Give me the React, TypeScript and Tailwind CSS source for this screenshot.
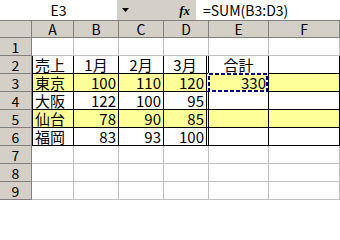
import { Fragment } from "react";

const rows = [
  { n: 1, cells: ["", "", "", "", "", ""], kind: "plain" },
  { n: 2, cells: ["売上", "1月", "2月", "3月", "合計", ""], kind: "head" },
  { n: 3, cells: ["東京", "100", "110", "120", "330", ""], kind: "yellow" },
  { n: 4, cells: ["大阪", "122", "100", "95", "", ""], kind: "white" },
  { n: 5, cells: ["仙台", "78", "90", "85", "", ""], kind: "yellow" },
  { n: 6, cells: ["福岡", "83", "93", "100", "", ""], kind: "white" },
  { n: 7, cells: ["", "", "", "", "", ""], kind: "plain" },
  { n: 8, cells: ["", "", "", "", "", ""], kind: "plain" },
  { n: 9, cells: ["", "", "", "", "", ""], kind: "plain" },
];

const cols = ["A", "B", "C", "D", "E", "F"];

function cellClass(kind: string, col: number) {
  if (kind === "plain") return "border-r border-b border-[#c0c0c0]";
  if (col === 0) return "border-l border-r border-b border-black";
  if (col === 3) return "border-r-[3px] border-b border-double border-black";
  return "border-r border-b border-black";
}

function alignClass(kind: string, col: number) {
  if (col === 0) return "justify-start pl-[2px]";
  if (kind === "head") return "justify-center";
  return "justify-end pr-[2px]";
}

function MarchingAnts() {
  return (
    <svg className="absolute -left-[1px] -top-[1px] h-[19px] w-[60px]" viewBox="0 0 60 19">
      <rect x="1" y="1" width="58" height="17" fill="none" stroke="#ffffff" strokeWidth="2" />
      <rect x="1" y="1" width="58" height="17" fill="none" stroke="#000080" strokeWidth="2" strokeDasharray="4 2" />
    </svg>
  );
}

export default function App() {
  return (
    <div className="h-[200px] w-[340px] overflow-hidden bg-white font-['Noto_Sans_CJK_JP',sans-serif] text-black">
      <div className="flex h-[21px] border-b border-[#808080] text-[14px] leading-none">
        <div className="flex w-[117px] items-center justify-center bg-white">E3</div>
        <div className="flex w-[79px] items-center bg-[#d4d0c8]">
          <svg className="ml-[5px] h-[4px] w-[7px]" viewBox="0 0 7 4">
            <path d="M0 0h7L3.5 4z" fill="#000" />
          </svg>
          <span className="ml-auto mr-[6px] font-['Liberation_Serif',serif] text-[13px] font-bold italic">fx</span>
        </div>
        <div className="flex flex-1 items-center bg-white pl-[7px]">=SUM(B3:D3)</div>
      </div>

      <div className="grid grid-cols-[32px_42px_45px_45px_45px_60px_1fr] text-[15px] leading-none">
        <div className="h-[17px] border-r border-b border-[#808080] bg-[#d4d0c8]" />
        {cols.map((c) => (
          <div
            key={c}
            className="flex h-[17px] items-center justify-center border-r border-b border-[#808080] bg-[#d4d0c8] text-[14px]"
          >
            {c}
          </div>
        ))}
        {rows.map((r) => (
          <Fragment key={r.n}>
            <div className="flex h-[18px] items-center justify-center border-r border-b border-[#808080] bg-[#d4d0c8] text-[14px]">
              {r.n}
            </div>
            {r.cells.map((v, i) => (
              <div
                key={i}
                className={`relative flex h-[18px] items-center ${cellClass(r.kind, i)} ${alignClass(r.kind, i)} ${
                  r.kind === "yellow" ? "bg-[#ffff99]" : "bg-white"
                }`}
              >
                {v}
                {r.n === 3 && i === 4 && <MarchingAnts />}
              </div>
            ))}
          </Fragment>
        ))}
      </div>
    </div>
  );
}
